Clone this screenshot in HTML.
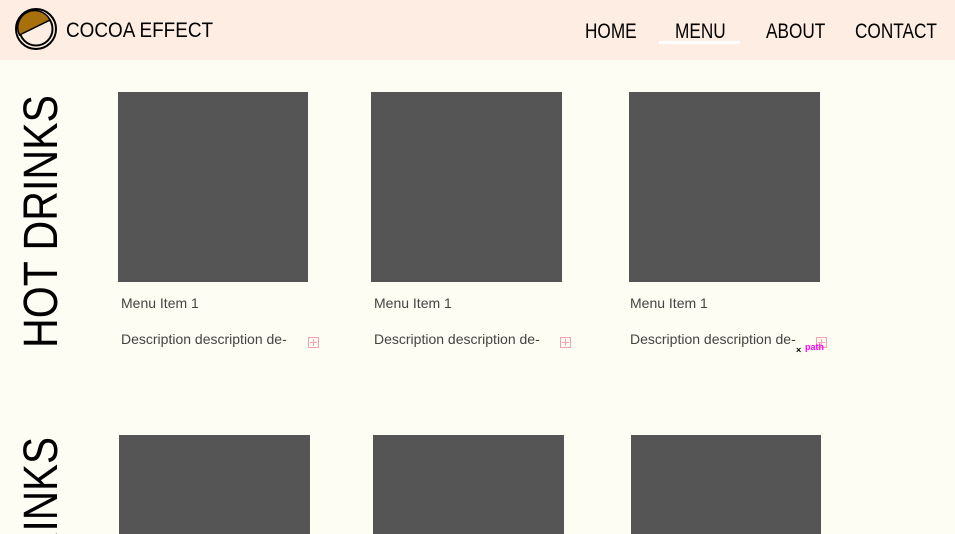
<!DOCTYPE html>
<html style="overflow:hidden;width:955px;height:534px"><head><style>
body{margin:0;width:955px;height:534px;overflow:hidden;background:#fdfdf3;font-family:"Liberation Sans",sans-serif;position:relative}
.hdr{position:absolute;left:0;top:0;width:955px;height:60px;background:#feede2}
.t{position:absolute;color:#000;font-size:21px;top:20px;transform-origin:0 0;transform:scaleX(0.82);white-space:nowrap}
.box{position:absolute;width:190px;height:190px;background:#555}
.lbl{position:absolute;font-size:14px;color:#444;white-space:nowrap}
.plus{position:absolute;width:9px;height:9px;border:1px solid #f4a0b0}
.plus:before{content:"";position:absolute;left:4px;top:1px;width:1px;height:7px;background:#f4a0b0}
.plus:after{content:"";position:absolute;left:1px;top:4px;width:7px;height:1px;background:#f4a0b0}
</style></head><body>
<div class="hdr"></div>
<svg style="position:absolute;left:14px;top:7px" width="44" height="44" viewBox="0 0 44 44">
<circle cx="22" cy="22" r="20" fill="none" stroke="#000" stroke-width="2"/>
<circle cx="22" cy="22" r="16.5" fill="none" stroke="#000" stroke-width="2"/>
<path d="M5.5 28 A16.5 16.5 0 0 1 36 13 Z" fill="#a8700a" stroke="#000" stroke-width="1.5"/>
</svg>
<div class="t" style="left:66px;top:19px;transform:scaleX(0.9)">COCOA EFFECT</div>
<div class="t" style="left:585px">HOME</div>
<div class="t" style="left:675px">MENU</div>
<div style="position:absolute;left:659px;top:41px;width:81px;height:3px;background:#fff"></div>
<div class="t" style="left:766px">ABOUT</div>
<div class="t" style="left:855px">CONTACT</div>
<svg style="position:absolute;left:0;top:60px" width="80" height="474">
<text transform="translate(57,288) rotate(-90)" font-family="Liberation Sans" font-size="48" textLength="253" lengthAdjust="spacingAndGlyphs" fill="#000">HOT DRINKS</text>
<text transform="translate(57,530) rotate(-90)" font-family="Liberation Sans" font-size="48" textLength="153" lengthAdjust="spacingAndGlyphs" fill="#000">DRINKS</text>
</svg>
<div class="box" style="left:118px;top:92px"></div>
<div class="box" style="left:371px;top:92px;width:191px"></div>
<div class="box" style="left:629px;top:92px;width:191px"></div>
<div class="box" style="left:119px;top:435px;width:191px;height:99px"></div>
<div class="box" style="left:373px;top:435px;width:191px;height:99px"></div>
<div class="box" style="left:631px;top:435px;height:99px"></div>
<div class="lbl" style="left:121px;top:295px">Menu Item 1</div>
<div class="lbl" style="left:374px;top:295px">Menu Item 1</div>
<div class="lbl" style="left:630px;top:295px">Menu Item 1</div>
<div class="lbl" style="left:121px;top:331px">Description description de-</div>
<div class="lbl" style="left:374px;top:331px">Description description de-</div>
<div class="lbl" style="left:630px;top:331px">Description description de-</div>
<div class="plus" style="left:308px;top:337px"></div>
<div class="plus" style="left:560px;top:337px"></div>
<div class="plus" style="left:816px;top:337px"></div>
<div style="position:absolute;left:796px;top:345px;font-size:9px;font-weight:bold">×</div>
<div style="position:absolute;left:805px;top:342px;font-size:9px;font-weight:bold;color:#f0f">path</div>
</body></html>
